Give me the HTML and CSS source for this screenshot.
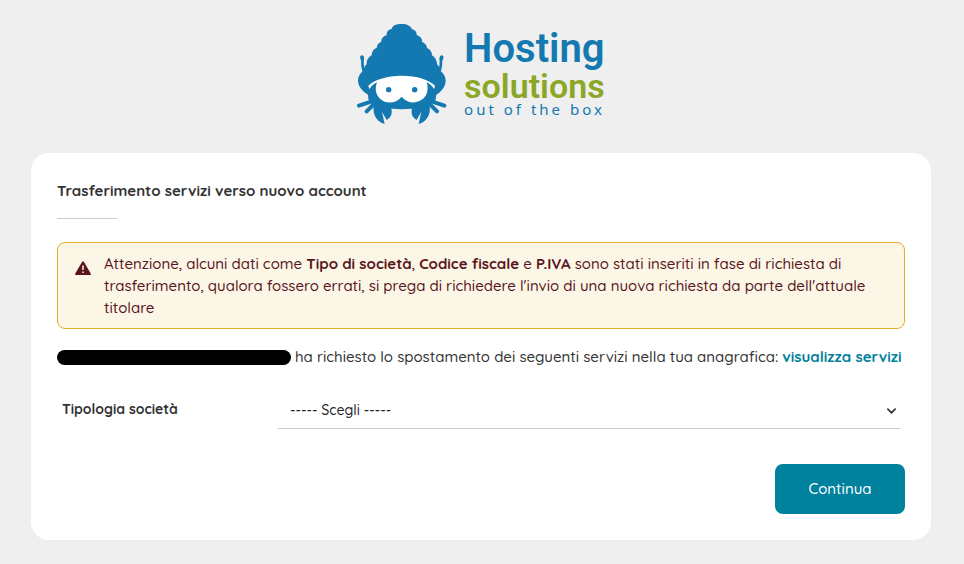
FILE: index.html
```html
<!DOCTYPE html>
<html lang="it">
<head>
  <meta charset="UTF-8">
  <meta name="viewport" content="width=device-width, initial-scale=1.0">
  <title>Hosting Solutions - Trasferimento servizi</title>
  <link rel="stylesheet" href="styles.css">
</head>
<body>

  <header class="brand">
    <svg class="brand-icon" viewBox="24 27 270 300" aria-hidden="true">
      <g fill="#1479b1">
        <path d="M128 42 C130 31 143 27 158 27 C174 27 186 33 189 43 C198 44 204 52 203 60 C213 63 220 70 219 80 C228 84 234 91 234 99 C244 103 249 111 249 121 C259 128 264 137 264 148 C270 153 272 160 272 166 C283 174 290 184 290 197 C290 214 278 229 262 239 L259 258 C253 262 246 265 238 267 L214 276 C179 285 138 285 103 276 L78 267 C69 265 62 260 58 252 L57 239 C39 229 27 213 27 196 C27 184 34 174 44 166 C44 160 47 153 53 148 C52 137 58 127 68 121 C68 111 73 102 83 99 C83 91 89 83 97 80 C97 70 104 63 113 61 C112 51 118 43 128 42Z"/>
        <path d="M78 258 C66 290 78 319 107 327 L99 290 L113 315 C131 305 132 286 122 270 L102 258Z"/>
        <path d="M238 258 C250 290 238 319 209 327 L217 290 L203 315 C185 305 184 286 194 270 L214 258Z"/>
      </g>
      <g fill="none" stroke="#1479b1" stroke-linecap="round">
        <path stroke-width="8" d="M45 172 C41 160 39 145 40 129 M271 172 C275 160 277 145 276 129"/>
        <path stroke-width="11" d="M39 126 L40 132 M278 126 L277 132"/>
        <path stroke-width="12" d="M30 272 L66 260 M53 289 L78 264 M286 272 L250 260 M264 289 L239 264"/>
      </g>
      <path fill="#fff" d="M58 212 C75 195 112 182 158 182 C204 182 240 194 258 212 L255 222 C250 214 243 207 233 202 C239 222 235 239 224 250 C204 269 174 265 158 245 C142 265 112 269 94 252 C80 239 77 222 84 202 C75 206 66 214 61 223Z"/>
      <g fill="#1479b1">
        <circle cx="119" cy="224" r="8"/>
        <circle cx="197" cy="224" r="8"/>
      </g>
    </svg>
    <div class="brand-text">
      <span class="brand-name">Hosting</span>
      <span class="brand-sub">solutions</span>
      <span class="brand-claim">out of the box</span>
    </div>
  </header>

  <main class="card">
    <h1 class="card-title">Trasferimento servizi verso nuovo account</h1>

    <div class="alert" role="alert">
      <svg class="alert-icon" viewBox="0 0 16 14" aria-hidden="true">
        <path fill="#58151c" d="M7 1 Q8 -.6 9 1 L15.700 12.500 Q16.300 14 15 14 H1 Q-.3 14 .3 12.500Z"/>
        <path stroke="#fcf6e6" stroke-width="1.500" d="M8 4.500 V9 M8 10.500 V12"/>
      </svg>
      <p>Attenzione, alcuni dati come <strong>Tipo di società</strong>, <strong>Codice fiscale</strong> e <strong>P.IVA</strong> sono stati inseriti in fase di richiesta di trasferimento, qualora fossero errati, si prega di richiedere l'invio di una nuova richiesta da parte dell'attuale titolare</p>
    </div>

    <p class="request">
      <span class="redacted"></span>
      <span>ha richiesto lo spostamento dei seguenti servizi nella tua anagrafica: <a href="#">visualizza servizi</a></span>
    </p>

    <form>
      <div class="form-row">
        <label for="tipologia">Tipologia società</label>
        <div class="select-wrap">
          <select id="tipologia" name="tipologia">
            <option>----- Scegli -----</option>
          </select>
          <svg class="chevron" viewBox="0 0 10 6" aria-hidden="true">
            <path fill="none" stroke="#343a40" stroke-width="2" stroke-linecap="round" stroke-linejoin="round" d="M1 1 L5 5 L9 1"/>
          </svg>
        </div>
      </div>
      <div class="actions">
        <button type="submit">Continua</button>
      </div>
    </form>
  </main>

</body>
</html>
```

FILE: styles.css
```css
* {
  margin: 0;
  padding: 0;
  box-sizing: border-box;
}

body {
  background-color: #efefef;
  color: #333;
  font-family: Quicksand, Lato, sans-serif;
  font-size: 15px;
  font-weight: 500;
  line-height: 22px;
  padding: 24px 33px 24px 31px;
}

.brand {
  display: flex;
  justify-content: center;
  gap: 17px;
  margin-bottom: 29px;
}

.brand-icon {
  width: 90px;
  height: 100px;
}

.brand-text {
  display: flex;
  flex-direction: column;
  font-family: Roboto, "Noto Sans", sans-serif;
  color: #1479b1;
}

.brand-name {
  font-size: 40px;
  line-height: 50px;
  font-weight: 600;
}

.brand-sub {
  color: #8ba728;
  font-size: 34px;
  line-height: 24px;
  font-weight: 600;
}

.brand-claim {
  font-family: "Noto Sans", sans-serif;
  font-size: 15px;
  font-weight: 400;
  line-height: 22px;
  letter-spacing: 3px;
}

.card {
  background-color: #fff;
  border-radius: 18px;
  padding: 26px;
}

.card-title {
  font-size: 15px;
  line-height: 24px;
  font-weight: 700;
  margin-bottom: 23px;
}

.card-title::after {
  content: "";
  display: block;
  width: 60px;
  margin-top: 15px;
  border-bottom: 1px solid #ccc;
}

.alert {
  display: flex;
  align-items: flex-start;
  gap: 13px;
  background-color: #fcf6e6;
  border: 1px solid #e3ac21;
  border-radius: 8px;
  color: #58151c;
  padding: 10px 17px 9px;
  margin-bottom: 17px;
}

.alert-icon {
  width: 16px;
  height: 14px;
  margin-top: 8px;
  flex-shrink: 0;
}

.request {
  display: flex;
  align-items: center;
  gap: 4px;
  margin-bottom: 20px;
}

.redacted {
  width: 234px;
  height: 15px;
  border-radius: 8px;
  background-color: #000;
  flex-shrink: 0;
}

a {
  color: #00819d;
  font-weight: 700;
  text-decoration: none;
}

.form-row {
  display: grid;
  grid-template-columns: 216px 1fr;
  padding: 0 5px;
  margin-bottom: 35px;
}

label {
  font-size: 14px;
  font-weight: 700;
  padding-top: 10px;
}

.select-wrap {
  position: relative;
}

select {
  appearance: none;
  width: 100%;
  height: 41px;
  border: none;
  border-bottom: 1px solid #ccc;
  background: none;
  color: #212529;
  font-family: inherit;
  font-size: 14px;
  font-weight: 500;
  padding: 4px 12px 0;
}

.chevron {
  position: absolute;
  right: 4px;
  top: 20px;
  width: 9px;
  height: 6px;
  pointer-events: none;
}

.actions {
  display: flex;
  justify-content: flex-end;
}

button {
  min-width: 130px;
  background-color: #00819d;
  color: #fff;
  border: none;
  border-radius: 8px;
  font-family: inherit;
  font-size: 15px;
  font-weight: 500;
  line-height: 22px;
  padding: 14px 33px;
  cursor: pointer;
}

button:hover {
  background-color: #006c84;
}
```
